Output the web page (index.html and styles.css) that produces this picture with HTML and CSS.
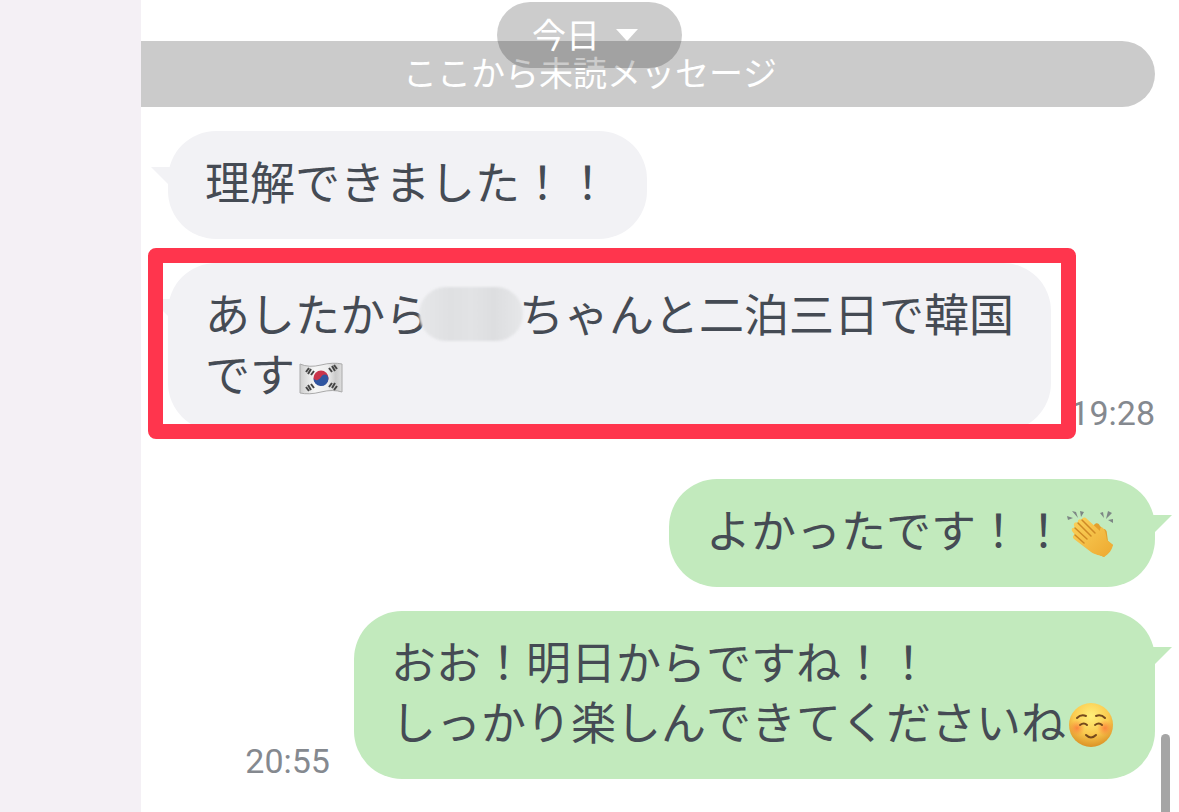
FILE: index.html
```
<!DOCTYPE html>
<html lang="ja">
<head>
    <meta charset="UTF-8">
    <meta name="viewport" content="width=device-width, initial-scale=1.0">
    <title>トーク</title>
    <link rel="stylesheet" href="styles.css">
</head>
<body>
    <div class="app">
        <aside class="sidebar"></aside>

        <main class="chat">
            <!-- Floating date -->
            <div class="date-bar">
                <button type="button" class="date-pill">
                    <span>今日</span>
                    <svg width="22" height="12" viewBox="0 0 22 12"><path d="M0 0h22L12 11q-1 1-2 0z" fill="#fff"/></svg>
                </button>
            </div>

            <div class="unread">ここから未読メッセージ</div>

            <div class="messages">
                <div class="row in">
                    <div class="bubble">理解できました！！</div>
                </div>

                <div class="row in">
                    <div class="bubble marked">あしたから<span class="masked"></span>ちゃんと二泊三日で韓国<br>です<svg class="emoji" viewBox="0 0 52 52" role="img" aria-label="韓国">
                            <defs>
                                <linearGradient id="cloth" x1="0" x2="1" y1="0" y2="0">
                                    <stop offset="0" stop-color="#cfcfcf"/>
                                    <stop offset=".35" stop-color="#f6f6f6"/>
                                    <stop offset=".65" stop-color="#eeeeee"/>
                                    <stop offset=".85" stop-color="#cbcbcb"/>
                                    <stop offset="1" stop-color="#dedede"/>
                                </linearGradient>
                            </defs>
                            <path d="M5 13Q14 17 26 14T47 13V41Q38 38 26 41T5 42z" fill="url(#cloth)" stroke="#aaa" stroke-width="1"/>
                            <circle cx="26" cy="27" r="7.5" fill="#c9344b"/>
                            <path d="M18.5 27a7.500 7.500 0 0 0 15 1c0-5-5-6-7.500-2s-6 4-7.500 1z" fill="#2f55a0"/>
                            <g stroke="#444" stroke-width="2">
                                <path d="M11 21l3-4M13 23l3-5M16 24l3-4"/>
                                <path d="M34 17l3 4M37 15l3 5M39 14l3 4"/>
                                <path d="M11 36l3 4M13 34l3 5M16 33l3 4"/>
                                <path d="M34 36l3-4M37 37l3-5M39 39l3-4"/>
                            </g>
                        </svg></div>
                    <time class="time">19:28</time>
                </div>

                <div class="row out first">
                    <div class="bubble">よかったです！！<svg class="emoji" viewBox="0 0 52 52" role="img" aria-label="拍手">
                            <defs>
                                <linearGradient id="skin" x1="0" x2="1" y1="0" y2="1">
                                    <stop offset="0" stop-color="#fbd35c"/>
                                    <stop offset="1" stop-color="#eda82f"/>
                                </linearGradient>
                            </defs>
                            <path d="M28 18c2-3 5-2 6 1l3 3c3 0 4 2 4 5l1 7 5 4-9 12-7-3-12-9z" fill="#e3a02d"/>
                            <path d="M6 24c-1-3 1-4 3-3l-1-2c-1-3 2-5 4-3-1-3 2-5 4-3 0-3 3-3 5-1l13 12c0-3 1-5 3-3 3 3 3 8 4 12l6 5c-1 5-4 9-9 12-4-2-9-2-13-5L8 32c-2-2-1-4 1-4z" fill="url(#skin)"/>
                            <path d="M9 21l12 11M12 16l13 13M16 13l13 13M9 28l9 8" fill="none" stroke="#cf8a25" stroke-width="1.500" stroke-linecap="round"/>
                            <path d="M6 4l4 1 2 6zM14 4l4 1-3 5zM1 9l6 2-5 2zM34 6l3-1 1 6zM42 4l4 2-6 6zM42 13l5-1 0 4z" fill="#7d8785"/>
                        </svg></div>
                </div>

                <div class="row out">
                    <div class="bubble">おお！明日からですね！！<br>しっかり楽しんできてくださいね<svg class="emoji" viewBox="0 0 52 52" role="img" aria-label="笑顔">
                            <defs>
                                <radialGradient id="face" cx=".5" cy=".3" r=".72">
                                    <stop offset="0" stop-color="#fff07a"/>
                                    <stop offset=".55" stop-color="#fbcb50"/>
                                    <stop offset="1" stop-color="#d98e23"/>
                                </radialGradient>
                                <radialGradient id="cheek">
                                    <stop offset="0" stop-color="#fb7a3c" stop-opacity=".85"/>
                                    <stop offset="1" stop-color="#fb8a3c" stop-opacity="0"/>
                                </radialGradient>
                            </defs>
                            <circle cx="25" cy="26" r="22" fill="url(#face)"/>
                            <circle cx="11" cy="29" r="8" fill="url(#cheek)"/>
                            <circle cx="39" cy="29" r="8" fill="url(#cheek)"/>
                            <g fill="none" stroke="#75491c" stroke-width="2" stroke-linecap="round">
                                <path d="M11 19q4-4 9-2M30 17q5-2 9 2"/>
                                <path d="M14 26q4-3 7 0M29 26q4-3 7 0"/>
                                <path d="M20 36q5 5 10 0"/>
                            </g>
                        </svg></div>
                    <time class="time">20:55</time>
                </div>
            </div>

            <div class="scroll-thumb"></div>
        </main>
    </div>
</body>
</html>
```
FILE: styles.css
```
/* ===== Base Styles ===== */
body {
    margin: 0;
    font-family: "Noto Sans CJK JP", sans-serif;
    font-kerning: none;
    color: #454b54;
}

.app {
    display: flex;
    min-height: 100vh;
}

.sidebar {
    flex: 0 0 141px;
    background: #f4f0f5;
}

.chat {
    position: relative;
    flex: 1;
    box-sizing: border-box;
    padding: 41px 24px 0 0;
    background: #fff;
    overflow: hidden;
}

/* ===== Date + Unread ===== */
.date-bar {
    position: absolute;
    top: 2px;
    left: 0;
    right: 141px;
    display: flex;
    justify-content: center;
}

.date-pill {
    display: flex;
    align-items: center;
    gap: 16px;
    height: 66px;
    padding: 0 44px 0 35px;
    border: none;
    border-radius: 33px;
    background: rgba(0, 0, 0, 0.2);
    color: #fff;
    font-family: inherit;
    font-size: 34px;
    cursor: pointer;
}

.date-pill span {
    padding-bottom: 4px;
}

.unread {
    padding: 0 116px 4px 0;
    border-radius: 0 33px 33px 0;
    background: #cbcbcb;
    color: #fff;
    font-size: 34px;
    line-height: 62px;
    text-align: center;
}

/* ===== Messages ===== */
.messages {
    display: flex;
    flex-direction: column;
    gap: 24px;
    padding: 24px 0 24px 27px;
}

.row {
    display: flex;
    align-items: flex-end;
    gap: 18px;
}

.row.in {
    justify-content: space-between;
}

.row.out {
    flex-direction: row-reverse;
    gap: 24px;
}

.row.first {
    margin-top: 24px;
}

.bubble {
    position: relative;
    padding: 20px 37px 28px;
    border-radius: 48px;
    font-size: 45px;
    line-height: 60px;
    white-space: nowrap;
}

.in .bubble {
    background: #f2f2f5;
}

.out .bubble {
    background: #c2eabd;
}

/* Tail */
.bubble::before {
    content: "";
    position: absolute;
    top: 36px;
    width: 30px;
    height: 18px;
}

.in .bubble::before {
    left: -17px;
    background: #f2f2f5;
    clip-path: polygon(0 0, 100% 0, 100% 100%, 60% 100%);
}

.out .bubble::before {
    right: -17px;
    background: #c2eabd;
    clip-path: polygon(0 0, 100% 0, 40% 100%, 0 100%);
}

/* Red frame around the message */
.marked::after {
    content: "";
    position: absolute;
    z-index: 1;
    top: -15px;
    right: -25px;
    bottom: -8px;
    left: -20px;
    border: 15px solid #ff354d;
    border-radius: 8px;
}

.masked {
    display: inline-block;
    width: 104px;
    height: 54px;
    margin: -8px -4px -8px -11px;
    border-radius: 27px;
    background: linear-gradient(90deg, #e6e7e9, #dfe0e2 30%, #e2e3e5 50%, #dddee0 72%, #e6e7e9);
    filter: blur(1px);
    vertical-align: -1px;
}

.emoji {
    width: 52px;
    height: 52px;
    margin: -8px 0;
    vertical-align: -3px;
}

.time {
    color: #85898f;
    font-family: Roboto, sans-serif;
    font-size: 34px;
    line-height: 36px;
}

.scroll-thumb {
    position: absolute;
    right: 9px;
    bottom: 0;
    width: 9px;
    height: 78px;
    border-radius: 5px 5px 0 0;
    background: #a5a5a5;
}
```
